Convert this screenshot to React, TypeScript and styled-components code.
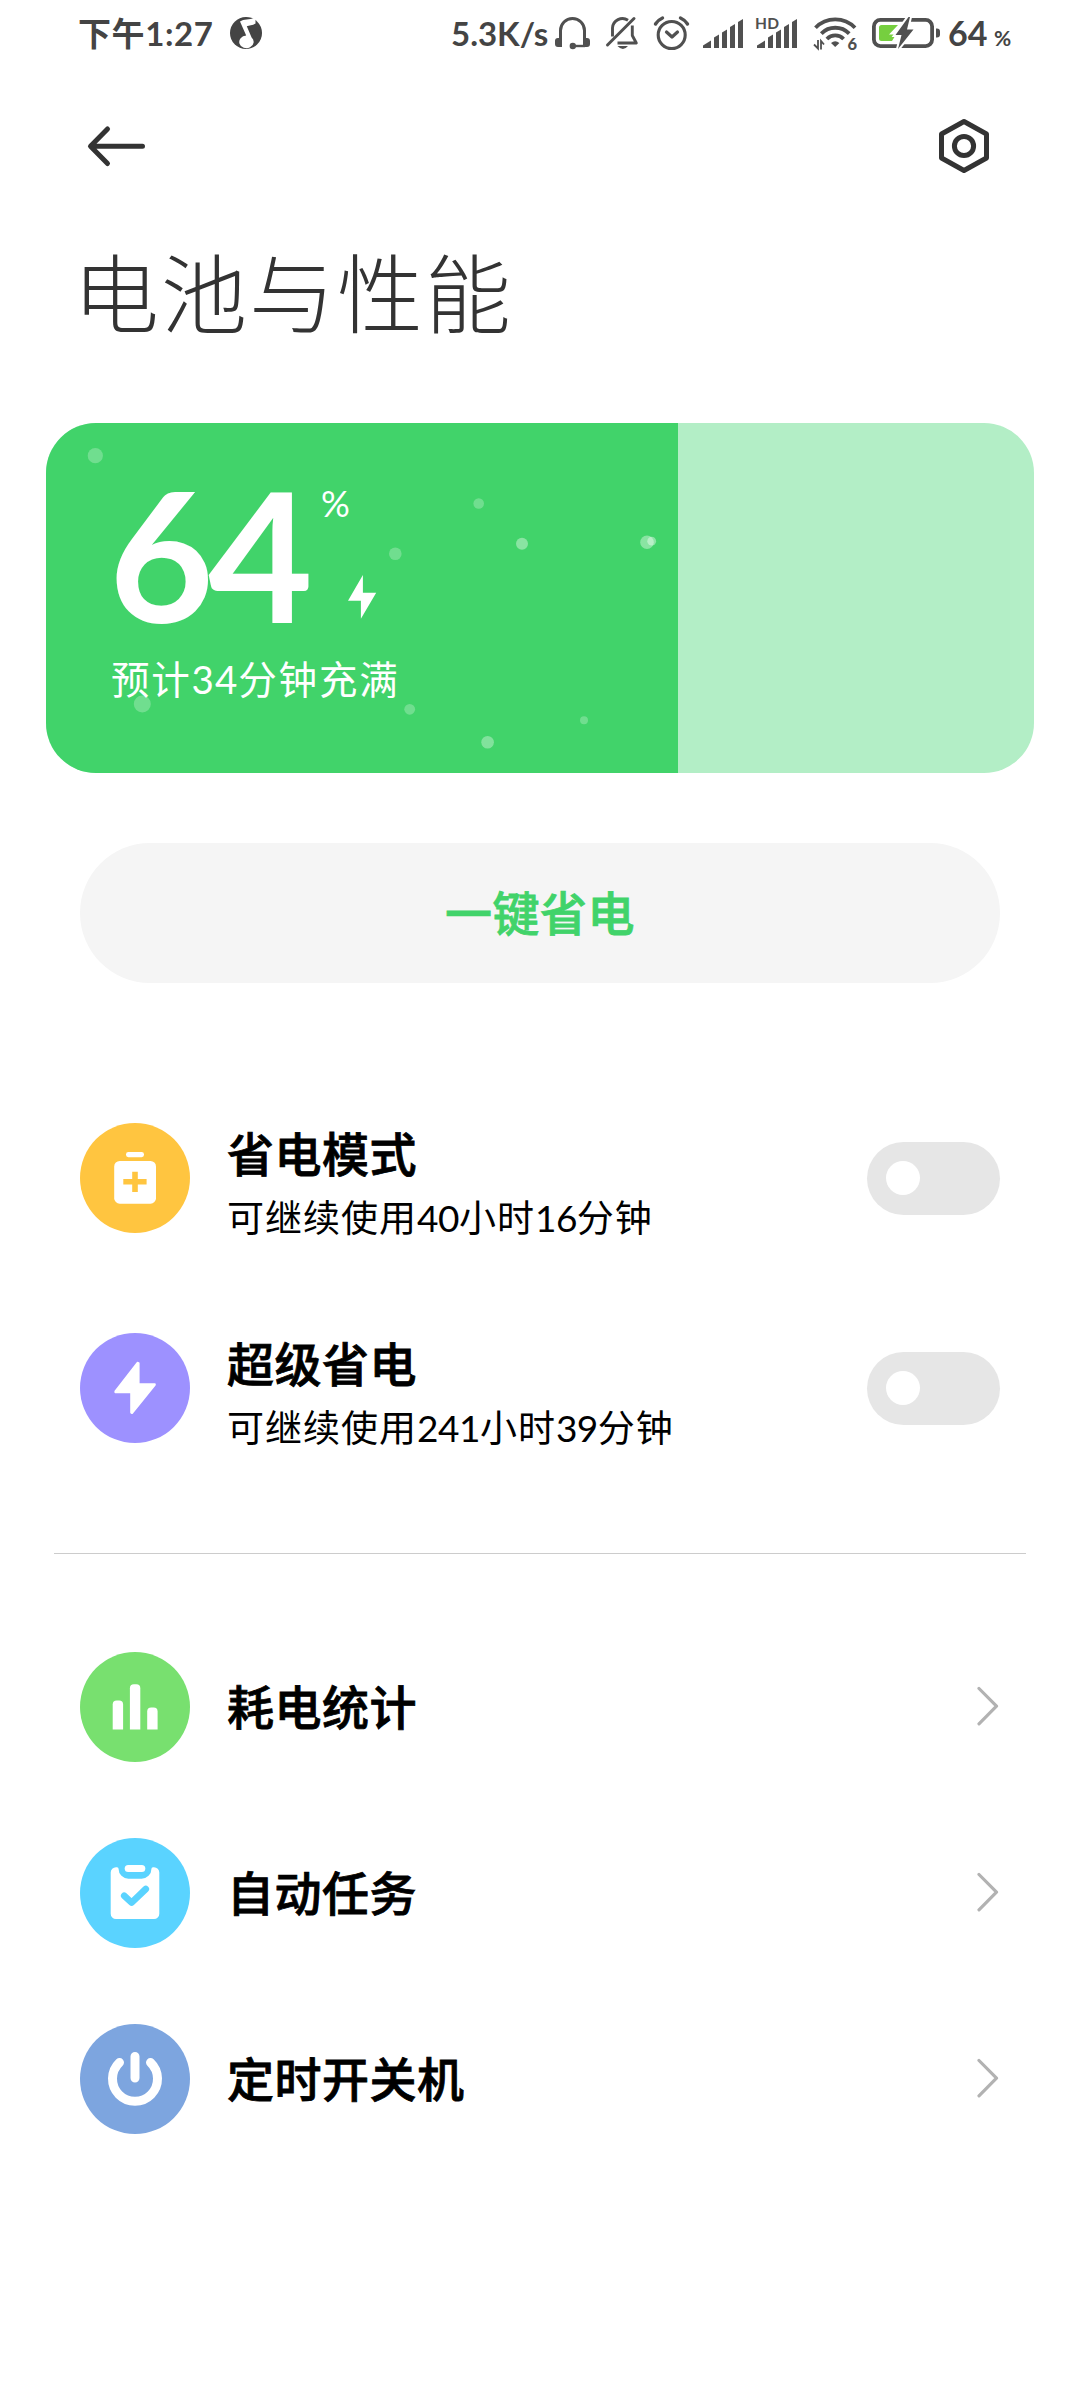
import React from 'react';
import styled, { createGlobalStyle } from 'styled-components';

const GlobalStyle = createGlobalStyle`
  * { box-sizing: border-box; }
  html, body { margin: 0; padding: 0; background: #fff; }
  body {
    font-family: Lato, "Noto Sans CJK SC", sans-serif;
    color: #000;
  }
  svg { display: block; flex: none; }
`;

const Screen = styled.main`
  width: 1080px;
  height: 2400px;
  display: flex;
  flex-direction: column;
  background: #fff;
  overflow: hidden;
`;

const StatusBar = styled.div`
  height: 66px;
  padding: 0 67px 0 78px;
  display: flex;
  align-items: center;
  justify-content: space-between;
  color: #444;
`;

const StatusGroup = styled.div`
  display: flex;
  align-items: center;
`;

const StatusText = styled.span<{ $size: number; $spacing?: number; $width?: number; $gap?: number; $drop?: number }>`
  font-size: ${(p) => p.$size}px;
  line-height: 48px;
  font-weight: 700;
  letter-spacing: ${(p) => p.$spacing ?? 0}px;
  width: ${(p) => (p.$width ? `${p.$width}px` : 'auto')};
  margin-left: ${(p) => p.$gap ?? 0}px;
  padding-top: ${(p) => p.$drop ?? 0}px;
  white-space: nowrap;
`;

const StatusIcon = styled.svg<{ $gap: number }>`
  margin-left: ${(p) => p.$gap}px;
  overflow: visible;
`;

const AppBar = styled.header`
  height: 160px;
  padding: 0 90px 0 86px;
  display: flex;
  align-items: center;
  justify-content: space-between;
`;

const IconButton = styled.button`
  border: 0;
  padding: 0;
  background: none;
`;

const PageTitle = styled.h1`
  margin: 18px 0 0 73px;
  font-size: 86px;
  line-height: 100px;
  font-weight: 300;
  letter-spacing: 2px;
  color: #333;
`;

const BatteryCard = styled.section`
  position: relative;
  flex: none;
  width: 988px;
  height: 350px;
  margin: 79px 0 0 46px;
  border-radius: 50px;
  overflow: hidden;
  background: #b3eec6;
  color: #fff;
`;

const Charge = styled.div`
  width: 632px;
  height: 100%;
  padding: 50px 0 0 63px;
  background: #41d36a;
`;

const Bubbles = styled.svg`
  position: absolute;
  left: 0;
  top: 0;
`;

const LevelRow = styled.div`
  height: 178px;
  display: flex;
`;

const LevelNumber = styled.span`
  width: 212px;
  font-size: 181px;
  line-height: 160px;
  font-weight: 700;
  letter-spacing: -6px;
`;

const LevelSide = styled.div`
  display: flex;
  flex-direction: column;
`;

const Percent = styled.span`
  font-size: 36px;
  line-height: 40px;
  margin-top: 10px;
`;

const ChargeBolt = styled.svg`
  margin: 52px 0 0 27px;
`;

const ChargeText = styled.div`
  padding-left: 2px;
  font-size: 38.5px;
  line-height: 56px;
  letter-spacing: 1.8px;
  white-space: nowrap;
`;

const SaveButton = styled.button`
  flex: none;
  width: 920px;
  height: 140px;
  margin: 70px 0 0 80px;
  border: 0;
  border-radius: 70px;
  background: #f5f5f5;
  color: #41d36a;
  font: 500 47px/60px Lato, "Noto Sans CJK SC", sans-serif;
  letter-spacing: 0.5px;
  -webkit-text-stroke: 0.8px currentColor;
`;

const List = styled.section<{ $top: number }>`
  margin-top: ${(p) => p.$top}px;
  padding: 0 80px;
`;

const Row = styled.div<{ $height: number }>`
  height: ${(p) => p.$height}px;
  display: flex;
  align-items: center;
`;

const Badge = styled.svg<{ $color: string }>`
  width: 110px;
  height: 110px;
  border-radius: 50%;
  background: ${(p) => p.$color};
`;

const RowBody = styled.div<{ $pad: number }>`
  flex: 1;
  margin-left: 37px;
  padding-top: ${(p) => p.$pad}px;
`;

const RowTitle = styled.div`
  font-size: 47px;
  line-height: 60px;
  font-weight: 500;
  letter-spacing: 0.5px;
  -webkit-text-stroke: 0.8px currentColor;
`;

const RowHint = styled.div`
  margin-top: 9px;
  font-size: 37px;
  line-height: 50px;
  letter-spacing: 1px;
  white-space: nowrap;
`;

const Digits = styled.span<{ $spacing: number }>`
  letter-spacing: ${(p) => p.$spacing}px;
`;

const Toggle = styled.button`
  width: 133px;
  height: 73px;
  padding: 0 0 0 19px;
  border: 0;
  border-radius: 37px;
  background: #e6e6e6;
  display: flex;
  align-items: center;
`;

const Knob = styled.span`
  width: 34px;
  height: 34px;
  border-radius: 50%;
  background: #fff;
`;

const Divider = styled.hr`
  width: 972px;
  height: 1px;
  flex: none;
  margin: 60px 54px 0;
  border: 0;
  background: #ccc;
`;

const INK = '#505050';

const SignalBars = () => (
  <>
    <path d="M0 29V26.5L8 21.5V29Z" />
    <path d="M11 29V18.5L16 15.5V29Z" />
    <path d="M19 29V13.5L24 10.5V29Z" />
    <path d="M27 29V8L32 5V29Z" />
    <path d="M35 29V3L40 0V29Z" />
  </>
);

const Chevron = () => (
  <svg width="23" height="42" viewBox="0 0 23 42">
    <path d="M2 2.500L19.500 20.200L2 37.800" fill="none" stroke="#b2b2b2" strokeWidth="3.2" strokeLinecap="round" strokeLinejoin="round" />
  </svg>
);

const bubbles = [
  [49.3, 32.7, 7.6, 0.25],
  [96.3, 281, 8.5, 0.25],
  [349.3, 130.7, 6.3, 0.25],
  [363.7, 286.3, 5.4, 0.25],
  [432.7, 80.5, 5.3, 0.25],
  [476, 120.7, 6, 0.38],
  [601, 119.2, 6.8, 0.38],
  [605.7, 118.2, 4.4, 0.4],
  [441.6, 319.3, 6.3, 0.34],
  [538, 297.3, 4, 0.25],
];

const savers = [
  {
    title: '省电模式',
    hint: ['可继续使用', '40', '小时', '16', '分钟'],
    color: '#ffc540',
    icon: (
      <>
        <rect x="46" y="29" width="18" height="5.2" rx="2.4" fill="#fff" />
        <rect x="34.2" y="38" width="41.8" height="42.7" rx="5.5" fill="#fff" />
        <path d="M43.3 58.8H66.6M55 48.7V69" stroke="#ffc540" strokeWidth="5.6" />
      </>
    ),
  },
  {
    title: '超级省电',
    hint: ['可继续使用', '241', '小时', '39', '分钟'],
    color: '#9d91ff',
    icon: (
      <path
        d="M57.5 29.8L35.4 58.3V59.3H51.2V79.6L52 80L74.8 51.8V51.2H58.6V30.2Z"
        fill="#fff"
        stroke="#fff"
        strokeWidth="2"
        strokeLinejoin="round"
      />
    ),
  },
];

const links = [
  {
    title: '耗电统计',
    color: '#78e06f',
    icon: (
      <>
        <path d="M32.7 77.4V52.4a4 4 0 0 1 4-4h2.4a4 4 0 0 1 4 4V77.4Z" fill="#fff" />
        <path d="M49.9 77.4V36.2a4 4 0 0 1 4-4h2.4a4 4 0 0 1 4 4V77.4Z" fill="#fff" />
        <path d="M67.2 77.4V59.5a4 4 0 0 1 4-4h2.4a4 4 0 0 1 4 4V77.4Z" fill="#fff" />
      </>
    ),
  },
  {
    title: '自动任务',
    color: '#5ad3ff',
    icon: (
      <>
        <path
          d="M37 29.3H36a5.3 5.3 0 0 0-5.3 5.3V75.7a5.3 5.3 0 0 0 5.3 5.3H74a5.3 5.3 0 0 0 5.3-5.3V34.6a5.3 5.3 0 0 0-5.3-5.3H73a1.6 1.6 0 0 0-1.6 1.6a9.8 9.8 0 0 1-9.8 9.8H48.4a9.8 9.8 0 0 1-9.8-9.8a1.6 1.6 0 0 0-1.6-1.6Z"
          fill="#fff"
        />
        <rect x="44.7" y="27" width="20.6" height="7" rx="3.5" fill="#fff" />
        <path d="M44.2 57.8L51.6 64.6L65.8 51" fill="none" stroke="#5ad3ff" strokeWidth="6.6" strokeLinecap="round" strokeLinejoin="round" />
      </>
    ),
  },
  {
    title: '定时开关机',
    color: '#7da5df',
    icon: (
      <path
        d="M39.5 38.5A22.5 22.5 0 1 0 70.5 38.5M55 32.5V54"
        fill="none"
        stroke="#fff"
        strokeWidth="9"
        strokeLinecap="round"
      />
    ),
  },
];

export default function App() {
  return (
    <>
      <GlobalStyle />
      <Screen>
        <StatusBar>
          <StatusGroup>
            <StatusText $size={33} $spacing={0.6} $width={152}>下午1:27</StatusText>
            <svg width="32" height="32" viewBox="0 0 32 32">
              <circle cx="16" cy="16" r="16" fill="#444" />
              <path d="M10 4.5C14 1.8 19 3 24.5 1L25.5 0V6.5C22.5 8.6 19 8.2 16.8 9.2L21.6 20.5A7.2 6.3 0 1 1 16.2 18.6Z" fill="#fff" />
            </svg>
          </StatusGroup>
          <StatusGroup>
            <StatusText $size={33} $width={104}>5.3K/s</StatusText>
            <StatusIcon $gap={0} width="35" height="32" viewBox="0 0 35 32">
              <path d="M5.500 24V13.500a12 12 0 0 1 24 0V24" fill="none" stroke={INK} strokeWidth="3" />
              <path d="M7 21V30H3a3 3 0 0 1-3-3V24a3 3 0 0 1 3-3ZM28 21V30H32a3 3 0 0 0 3-3V24a3 3 0 0 0-3-3Z" fill={INK} />
              <path d="M30 29H18" stroke={INK} strokeWidth="2.400" />
              <circle cx="17.800" cy="29" r="3.200" fill={INK} />
            </StatusIcon>
            <StatusIcon $gap={16} width="33" height="32" viewBox="0 0 33 32">
              <path d="M28 1.500L1.500 28" stroke={INK} strokeWidth="3" strokeLinecap="round" />
              <path d="M6.500 19.500V11a10 10 0 0 1 15.500-7.800M26.300 8.500V18.500L30.300 26H11.500" fill="none" stroke={INK} strokeWidth="2.900" strokeLinejoin="round" />
              <path d="M11.500 29H22Q17 35 11.500 29Z" fill={INK} />
            </StatusIcon>
            <StatusIcon $gap={15} width="35" height="34" viewBox="0 0 35 34">
              <circle cx="17.700" cy="19" r="13.500" fill="none" stroke={INK} strokeWidth="3.100" />
              <path d="M12.500 16L18 21L23.500 16" fill="none" stroke={INK} strokeWidth="3.200" strokeLinecap="round" strokeLinejoin="round" />
              <path d="M1.500 8Q4 4 8.500 2M26.500 2Q31 4 33.500 8" fill="none" stroke={INK} strokeWidth="3.400" strokeLinecap="round" />
            </StatusIcon>
            <StatusIcon $gap={14} width="40" height="29" viewBox="0 0 40 29" fill={INK}>
              <SignalBars />
            </StatusIcon>
            <StatusIcon $gap={13} width="42" height="29" viewBox="0 0 42 29" fill={INK}>
              <g transform="translate(1 0)">
                <SignalBars />
              </g>
              <rect x="-1" y="-3" width="24" height="13.500" fill="#fff" />
              <text x="-1" y="9.600" fontFamily="Lato" fontSize="15.500" fontWeight="700" letterSpacing="0.300">HD</text>
            </StatusIcon>
            <StatusIcon $gap={16} width="43" height="33" viewBox="0 0 43 33">
              <path d="M1.500 10.800A27.500 27.500 0 0 1 41 10.800M7.300 16.600A19.500 19.500 0 0 1 35.200 16.600M12.900 22A11.500 11.500 0 0 1 29.600 22" fill="none" stroke={INK} strokeWidth="3.800" />
              <path d="M17 26Q21.200 22.500 25.400 26L21.200 30Z" fill={INK} />
              <path d="M0 27.500L4 31.500V23M7 32.500V24L10 27.500" fill="none" stroke={INK} strokeWidth="1.800" />
              <text x="33.500" y="32.500" fontFamily="Lato" fontSize="16.500" fontWeight="900" fill={INK}>6</text>
            </StatusIcon>
            <StatusIcon $gap={15} width="68" height="30" viewBox="0 0 68 30">
              <rect x="1.900" y="1.900" width="58.200" height="26.200" rx="6.500" fill="none" stroke={INK} strokeWidth="3.800" />
              <path d="M9.500 7H26L17 16.500H24L20 23H9.500a2.500 2.500 0 0 1-2.500-2.500V9.500a2.500 2.500 0 0 1 2.500-2.500Z" fill="#76cf3f" />
              <path d="M36.500 -1L23.500 17H29.500L26 31L41.500 11.500H35L38 -1Z" fill={INK} stroke="#fff" strokeWidth="4" paintOrder="stroke" />
              <path d="M64 10.500h1a3 3 0 0 1 3 3v3a3 3 0 0 1-3 3h-1Z" fill={INK} />
            </StatusIcon>
            <StatusText $size={34} $gap={8} $width={46}>64</StatusText>
            <StatusText $size={21} $drop={9} $width={19}>%</StatusText>
          </StatusGroup>
        </StatusBar>

        <AppBar>
          <IconButton aria-label="返回">
            <svg width="60" height="44" viewBox="0 0 60 44">
              <path d="M21.500 5L4.500 22.300L21.500 39.500M5 22.300H56.500" fill="none" stroke="#333" strokeWidth="5" strokeLinecap="round" strokeLinejoin="round" />
            </svg>
          </IconButton>
          <IconButton aria-label="设置">
            <svg width="52" height="56" viewBox="0 0 52 56">
              <path d="M26 3.500L48.500 16V40L26 52.500L3.500 40V16Z" fill="none" stroke="#333" strokeWidth="5" strokeLinejoin="round" />
              <circle cx="26" cy="28" r="9.600" fill="none" stroke="#333" strokeWidth="5" />
            </svg>
          </IconButton>
        </AppBar>

        <PageTitle>电池与性能</PageTitle>

        <BatteryCard>
          <Charge>
            <LevelRow>
              <LevelNumber>64</LevelNumber>
              <LevelSide>
                <Percent>%</Percent>
                <ChargeBolt width="29" height="44" viewBox="0 0 29 44">
                  <path d="M14.900 0V17.700H28.200L12.900 43.700V25.700H0Z" fill="#fff" />
                </ChargeBolt>
              </LevelSide>
            </LevelRow>
            <ChargeText>
              预计<Digits $spacing={1}>34</Digits>分钟充满
            </ChargeText>
          </Charge>
          <Bubbles width="988" height="350" viewBox="0 0 988 350">
            {bubbles.map(([x, y, r, o]) => (
              <circle key={`${x}-${y}`} cx={x} cy={y} r={r} fill="#fff" fillOpacity={o} />
            ))}
          </Bubbles>
        </BatteryCard>

        <SaveButton>一键省电</SaveButton>

        <List $top={90}>
          {savers.map((s) => (
            <Row key={s.title} $height={210}>
              <Badge $color={s.color} viewBox="0 0 110 110">{s.icon}</Badge>
              <RowBody $pad={11}>
                <RowTitle>{s.title}</RowTitle>
                <RowHint>
                  {s.hint.map((part, i) => (i % 2 ? <Digits key={i} $spacing={-0.5}>{part}</Digits> : part))}
                </RowHint>
              </RowBody>
              <Toggle role="switch" aria-checked="false">
                <Knob />
              </Toggle>
            </Row>
          ))}
        </List>

        <Divider />

        <List $top={60}>
          {links.map((l) => (
            <Row key={l.title} $height={186}>
              <Badge $color={l.color} viewBox="0 0 110 110">{l.icon}</Badge>
              <RowBody $pad={0}>
                <RowTitle>{l.title}</RowTitle>
              </RowBody>
              <Chevron />
            </Row>
          ))}
        </List>
      </Screen>
    </>
  );
}
